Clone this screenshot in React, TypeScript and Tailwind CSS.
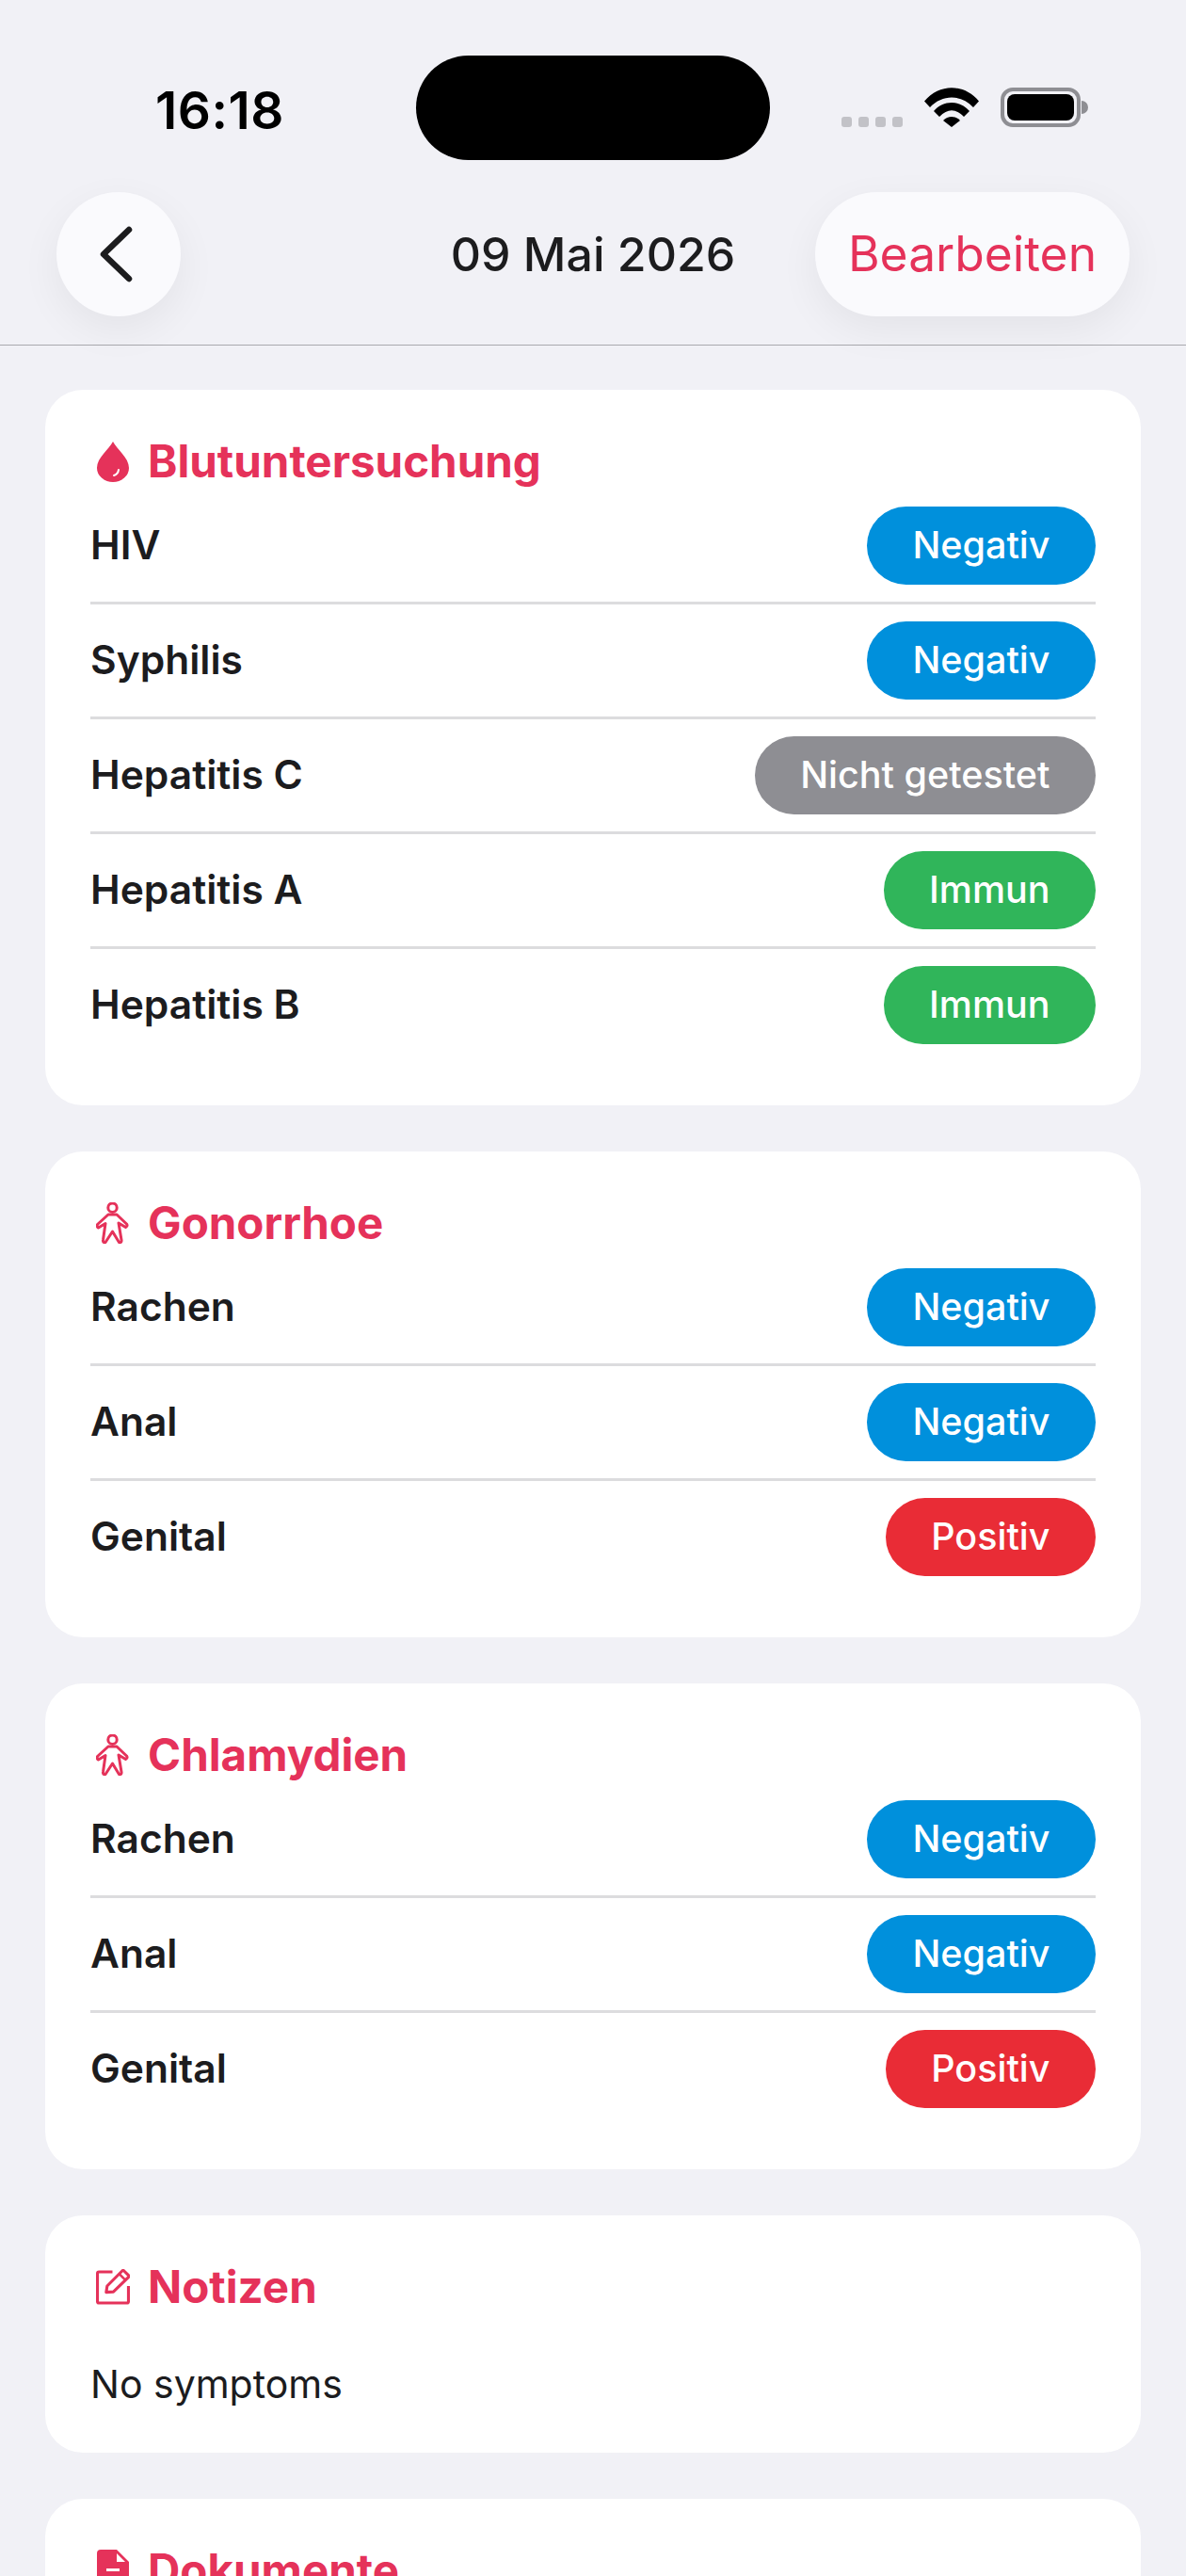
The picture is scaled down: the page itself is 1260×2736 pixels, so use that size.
type PillKind = "neg" | "pos" | "imm" | "none";

const pillStyles: Record<PillKind, { label: string; cls: string }> = {
  neg: { label: "Negativ", cls: "bg-[#0090dc]" },
  pos: { label: "Positiv", cls: "bg-[#e92c36]" },
  imm: { label: "Immun", cls: "bg-[#30b55a]" },
  none: { label: "Nicht getestet", cls: "bg-[#8e8e93]" },
};

function DropIcon() {
  return (
    <svg width="36" height="44" viewBox="0 0 36 44" fill="none">
      <path
        d="M18 1C14 9 1 18 1 29a17 15 0 0 0 34 0C35 18 22 9 18 1Z"
        fill="#e5325a"
      />
      <path
        d="M24 31c-.4 3-2 5-5 6"
        stroke="#fff"
        strokeWidth="2"
        strokeLinecap="round"
      />
    </svg>
  );
}

function PersonIcon() {
  return (
    <svg width="36" height="44" viewBox="7 7 36 44" fill="none">
      <circle cx="24.500" cy="12.700" r="4.700" stroke="#e5325a" strokeWidth="3" />
      <path
        d="M20 20 8.500 30.500q-1 2 1 3.500l7.500-4.500-2.500 17.500q-.5 3 2.500 2.500L24.500 38l7 11.500q3 .5 2.500-2.500l-3-18 7.500 4.500q2.500-1.500 1-3.500L29 20Z"
        stroke="#e5325a"
        strokeWidth="3"
        strokeLinejoin="round"
      />
    </svg>
  );
}

function NoteIcon() {
  return (
    <svg width="37" height="38" viewBox="8 7 35 36" fill="none">
      <path
        d="M25 9.500H11Q9.500 9.500 9.500 11V40Q9.500 41.500 11 41.500H40Q41.500 41.500 41.500 40V24"
        stroke="#e5325a"
        strokeWidth="3"
      />
      <path
        d="M18.500 30.500 19.500 24 35 8.500q1-1 2 0l4.500 4.500q1 1 0 2L26 30Z"
        stroke="#e5325a"
        strokeWidth="3"
        strokeLinejoin="round"
      />
      <path d="M32 11.500 38.500 18" stroke="#e5325a" strokeWidth="2.500" />
    </svg>
  );
}

function DocIcon() {
  return (
    <svg width="34" height="44" viewBox="0 0 34 44" fill="none">
      <path
        d="M4 0h17l13 13v27a4 4 0 0 1-4 4H4a4 4 0 0 1-4-4V4a4 4 0 0 1 4-4Z"
        fill="#e5325a"
      />
      <path d="M21 4v9h9Z" fill="#fff" />
      <rect x="10" y="20" width="14" height="3" fill="#fff" />
    </svg>
  );
}

function Row({ name, kind, last }: { name: string; kind: PillKind; last?: boolean }) {
  const pill = pillStyles[kind];
  return (
    <div className={last ? "" : "border-b-[3px] border-[#dcdcde] pb-[18px] mb-[18px]"}>
      <div className="flex items-center justify-between h-[83px]">
        <span className="text-[42.5px] font-semibold text-[#1c1c1e] leading-none">{name}</span>
        <span
          className={`${pill.cls} h-[83px] rounded-full px-[48.5px] flex items-center text-[39.5px] font-medium text-white`}
        >
          {pill.label}
        </span>
      </div>
    </div>
  );
}

function CardTitle({ icon, title }: { icon: React.ReactNode; title: string }) {
  return (
    <div className="flex items-center h-[56px] gap-[19px] pl-[6px]">
      <div className="w-[36px] flex justify-center">{icon}</div>
      <h2 className="text-[47.5px] font-bold text-[#e5325a] leading-none">{title}</h2>
    </div>
  );
}

function TestCard({
  icon,
  title,
  rows,
}: {
  icon: React.ReactNode;
  title: string;
  rows: { name: string; kind: PillKind }[];
}) {
  return (
    <section className="bg-white rounded-[40px] pt-[48px] px-[48px] pb-[65px]">
      <CardTitle icon={icon} title={title} />
      <div className="mt-[20px]">
        {rows.map((r, i) => (
          <Row key={r.name} name={r.name} kind={r.kind} last={i === rows.length - 1} />
        ))}
      </div>
    </section>
  );
}

const swabRows: { name: string; kind: PillKind }[] = [
  { name: "Rachen", kind: "neg" },
  { name: "Anal", kind: "neg" },
  { name: "Genital", kind: "pos" },
];

export default function App() {
  return (
    <div className="w-[1260px] h-[2736px] overflow-hidden bg-[#f1f1f6] font-['Inter',sans-serif]">
      {/* status bar */}
      <div className="h-[170px] pt-[59px] grid grid-cols-[442px_376px_1fr] items-start">
        <span className="pl-[165px] text-[55px] font-semibold text-black leading-none mt-[31px] tracking-[0.5px]">16:18</span>
        <div className="h-[111px] bg-black rounded-full" />
        <div className="flex items-end justify-end gap-[23px] mt-[34px] pr-[104px]">
          <div className="flex gap-[7px]">
            {[0, 1, 2, 3].map((i) => (
              <span key={i} className="w-[11px] h-[11px] rounded-[3px] bg-[#c2c2c7]" />
            ))}
          </div>
          <svg width="58" height="42" viewBox="0 0 58 42">
            <path d="M0 14.500C16 -4.500 42 -4.500 58 14.500L52 21C39 7 19 7 6 21Z" fill="#000" />
            <path d="M10 25C20 13 38 13 48 25L42 31C33 22 25 22 16 31Z" fill="#000" />
            <path d="M20 35C25 29.500 33 29.500 38 35L29 42Z" fill="#000" />
          </svg>
          <div className="flex items-center">
            <div className="w-[85px] h-[42px] rounded-[13px] border-[4px] border-[#8e8e93] p-[3px]">
              <div className="w-full h-full bg-black rounded-[8px]" />
            </div>
            <div className="w-[7px] h-[14px] rounded-r-full bg-[#8e8e93] ml-[1px]" />
          </div>
        </div>
      </div>

      {/* nav */}
      <div className="h-[197px] pt-[34px] border-b-[1.5px] border-[#a9a9ae]">
        <div className="grid grid-cols-[1fr_auto_1fr] items-center px-[60px]">
          <button className="w-[132px] h-[132px] rounded-full bg-[#fafafd] shadow-[0_14px_44px_rgba(0,0,0,0.06)] flex items-center justify-center justify-self-start">
            <svg className="mr-[6px]" width="38" height="60" viewBox="0 0 38 60" fill="none">
              <path d="M33 4 6 30l27 26" stroke="#1c1c1e" strokeWidth="6.500" strokeLinecap="round" strokeLinejoin="round" />
            </svg>
          </button>
          <span className="text-[50px] font-medium text-[#1c1c1e] leading-none">09 Mai 2026</span>
          <button className="h-[132px] w-[334px] rounded-full bg-[#fafafd] shadow-[0_14px_44px_rgba(0,0,0,0.06)] text-[51.5px] text-[#e5325a] justify-self-end">
            Bearbeiten
          </button>
        </div>
      </div>

      {/* cards */}
      <div className="px-[48px] pt-[47px] flex flex-col gap-[49px]">
        <TestCard
          icon={<DropIcon />}
          title="Blutuntersuchung"
          rows={[
            { name: "HIV", kind: "neg" },
            { name: "Syphilis", kind: "neg" },
            { name: "Hepatitis C", kind: "none" },
            { name: "Hepatitis A", kind: "imm" },
            { name: "Hepatitis B", kind: "imm" },
          ]}
        />
        <TestCard icon={<PersonIcon />} title="Gonorrhoe" rows={swabRows} />
        <TestCard icon={<PersonIcon />} title="Chlamydien" rows={swabRows} />

        <section className="bg-white rounded-[40px] pt-[48px] px-[48px] pb-[44px]">
          <CardTitle icon={<NoteIcon />} title="Notizen" />
          <p className="mt-[48px] h-[56px] flex items-center text-[41px] text-[#1c1c1e]">No symptoms</p>
        </section>

        <section className="bg-white rounded-[40px] pt-[48px] px-[48px] pb-[46px]">
          <CardTitle icon={<DocIcon />} title="Dokumente" />
        </section>
      </div>
    </div>
  );
}
